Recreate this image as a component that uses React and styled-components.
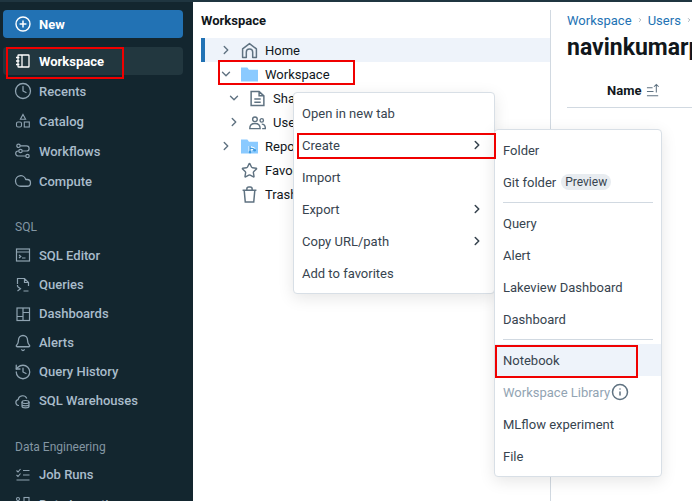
import React from "react";
import styled, { createGlobalStyle } from "styled-components";
import { ChevronRight, ChevronDown, Clock, Cloud, Bell, History, Star, Info } from "lucide-react";

const GlobalStyle = createGlobalStyle`
  html, body { margin: 0; padding: 0; background: #fff; }
  body { font-family: Roboto, "Noto Sans", sans-serif; font-size: 13px; }
  * { box-sizing: border-box; }
`;

const Svg = ({ size = 16, children, ...rest }) => (
  <svg width={size} height={size} viewBox="0 0 16 16" fill="none" stroke="currentColor" strokeWidth="1.1" {...rest}>
    {children}
  </svg>
);

const NewIcon = () => (
  <Svg><circle cx="8" cy="8" r="7" strokeWidth="1.4" /><path d="M8 4.6v6.8M4.6 8h6.8" strokeWidth="1.5" /></Svg>
);
const NotebookIcon = () => (
  <Svg><rect x="3" y="2" width="11" height="12" rx=".6" strokeWidth="1.3" /><path d="M7 2v12M1 4.5h3.4M1 8h3.4M1 11.5h3.4" strokeWidth="1.3" /></Svg>
);
const CatalogIcon = () => (
  <Svg><path d="M8 1.5l2.6 4.7H5.400z" /><rect x="1.500" y="9" width="5" height="5" rx="1.500" /><rect x="9.300" y="9" width="5" height="5" /></Svg>
);
const WorkflowIcon = () => (
  <Svg strokeWidth="1.200"><circle cx="3.500" cy="2.800" r="1.700" /><circle cx="5.500" cy="8" r="1.700" /><circle cx="12.500" cy="13" r="1.700" />
    <path d="M5.200 2.800h6.300a2.600 2.600 0 0 1 0 5.200H7.200M3.800 8h-.6a2.500 2.500 0 0 0 0 5h7.600" /></Svg>
);
const EditorIcon = () => (
  <Svg strokeWidth="1.200"><rect x="1.500" y="2" width="13" height="12" /><path d="M1.500 5h13M4 8l1.800 1.500L4 11M7 11h3.500" /></Svg>
);
const QueryIcon = () => (
  <Svg strokeWidth="1.200"><path d="M2.500 7V1.500h7l4 4V9M9.500 1.500v4h4" /><path d="M2.500 9.500l3 2.300-3 2.300M2.500 8v1.500M8.500 14h5" /></Svg>
);
const DashIcon = () => (
  <Svg strokeWidth="1.200"><rect x="2" y="2" width="12.500" height="12.500" /><path d="M8 2v12.500M8 6.500h6.500M2 10.500h6" /></Svg>
);
const WarehouseIcon = () => (
  <Svg strokeWidth="1.200"><path d="M4 12.500H3.500A3 3 0 0 1 3.200 6.600 4.500 4.500 0 0 1 11.800 5.500" /><ellipse cx="10.500" cy="9" rx="3.500" ry="1.500" /><path d="M7 9v4.500c0 .8 1.500 1.300 3.500 1.300s3.500-.5 3.500-1.300V9M7 11.500c0 .8 1.500 1.300 3.500 1.300s3.500-.5 3.500-1.300" /></Svg>
);
const RunsIcon = () => (
  <Svg><path d="M1.500 3.500l1.500 1.500 2.500-3M8 3.500h6.500M1.500 8l1.500 1.500L5.500 6.500M8 8h6.500M1.500 13h13" /></Svg>
);
const IngestIcon = () => (
  <Svg><circle cx="3" cy="3" r="1.500" /><rect x="9" y="1.500" width="5" height="5" /><path d="M3 4.500V11h6" /></Svg>
);
const HomeIcon = () => (
  <Svg size={17} strokeWidth="1.400"><path d="M1.500 14.500V6.500L8 1.500l6.500 5v8h-3.500V9.500a3 3 0 0 0-6 0v5z" strokeLinejoin="round" /></Svg>
);
const FolderIcon = ({ children }) => (
  <svg width="17" height="17" viewBox="0 0 16 16">
    <path d="M0 1.500h6l1.500 2H16v11H0z" fill="#8acaff" />
    {children}
  </svg>
);
const DocIcon = () => (
  <Svg size={17} strokeWidth="1.400"><path d="M2 1.500h7.500l4.500 4v9H2zM9.500 1.500v4H14M5 8.500h6M5 11.500h6" /></Svg>
);
const UsersIcon = () => (
  <Svg size={17} strokeWidth="1.300"><circle cx="5.600" cy="5" r="2.200" /><circle cx="12" cy="6" r="1.600" /><path d="M.700 13.800c0-3 2-4.800 4.900-4.800s4.900 1.800 4.900 4.800zM12 9.500c2 0 3.400 1.300 3.400 4.300h-3" /></Svg>
);
const TrashIcon = () => (
  <Svg size={17} strokeWidth="1.400"><path d="M1.500 4h13M3 4l1 11h8l1-11M5.500 4V2.800A1.800 1.800 0 0 1 7.300 1h1.400a1.800 1.800 0 0 1 1.800 1.800V4" /></Svg>
);
const SortIcon = () => (
  <Svg size={15} strokeWidth="1.100"><path d="M1 5h6M1 9h7M1 13.500h12M11 10V1.500M8.500 4L11 1.500 13.500 4" /></Svg>
);

const Page = styled.div`
  position: relative;
  display: flex;
  width: 692px;
  height: 501px;
  overflow: hidden;
  border-top: 2px solid #1f3540;
`;

const Sidebar = styled.nav`
  flex: 0 0 193px;
  background: #13262f;
  padding: 10px 10px 0 3px;
  margin-top: -2px;
`;

const NewButton = styled.div`
  display: flex;
  align-items: center;
  gap: 8px;
  height: 28px;
  padding-left: 12px;
  border-radius: 4px;
  background: #2272b4;
  color: #fff;
  font-weight: 700;
  margin-bottom: 9px;
`;

const NavRow = styled.div`
  display: flex;
  align-items: center;
  gap: 8px;
  height: ${(p) => p.$h || 30}px;
  margin-bottom: ${(p) => (p.$active ? 1 : 0)}px;
  padding-left: 12px;
  border-radius: 4px;
  color: ${(p) => (p.$active ? "#ffffff" : "#a9bccb")};
  background: ${(p) => (p.$active ? "#22373f" : "transparent")};
  font-weight: ${(p) => (p.$active ? 700 : 500)};
  white-space: nowrap;
  svg { flex: 0 0 16px; color: ${(p) => (p.$active ? "#ffffff" : "#8fa3b1")}; }
  svg.lucide { flex: 0 0 18px; margin: 0 -1px; }
`;

const SectionLabel = styled.div`
  display: flex;
  align-items: center;
  height: 20px;
  margin-top: ${(p) => p.$top}px;
  margin-bottom: ${(p) => p.$bottom}px;
  padding-left: 12px;
  color: #8396a3;
  font-size: 12px;
`;

const TreePanel = styled.section`
  flex: 0 0 358px;
  margin-top: 8px;
  padding-left: 8px;
  border-right: 1px solid #d1d9e1;
`;

const PanelTitle = styled.h2`
  margin: 1px 0 7px;
  height: 20px;
  line-height: 20px;
  font-size: 13px;
  font-weight: 700;
  color: #11171c;
`;

const TreeRow = styled.div`
  display: flex;
  align-items: center;
  height: 24px;
  padding-left: ${(p) => p.$indent}px;
  color: #11171c;
  white-space: nowrap;
  background: ${(p) => (p.$selected ? "#eef3fa" : "transparent")};
  border-left: 4px solid ${(p) => (p.$selected ? "#2272b4" : "transparent")};
  svg { color: #5f7281; flex: none; }
`;

const Caret = styled.span`
  display: flex;
  width: 18px;
  margin-right: 4px;
  color: #5f7281;
`;

const RowLabel = styled.span`
  margin-left: 7px;
`;

const DetailPanel = styled.section`
  flex: 1;
  min-width: 0;
  padding: 8px 0 0 16px;
  overflow: hidden;
  white-space: nowrap;
`;

const Crumbs = styled.div`
  display: flex;
  align-items: center;
  gap: 5px;
  height: 20px;
  color: #2272b4;
  svg { color: #5f7281; }
`;

const PageTitle = styled.h1`
  margin: 2px 0 10px;
  height: 32px;
  line-height: 32px;
  font-size: 23px;
  font-weight: 700;
  color: #11171c;
`;

const HeaderRow = styled.div`
  display: flex;
  align-items: center;
  gap: 5px;
  height: 34px;
  padding: 0 0 1px 40px;
  border-bottom: 1px solid #d1d9e1;
  color: #11171c;
  font-weight: 700;
  svg { color: #5f7281; }
`;

const Menu = styled.div`
  position: absolute;
  top: ${(p) => p.$top}px;
  left: ${(p) => p.$left}px;
  width: ${(p) => p.$width}px;
  padding: 4px 0;
  background: #fff;
  border: 1px solid #d8dfe6;
  border-radius: 4px;
  box-shadow: 0 4px 16px rgba(0, 0, 0, 0.1);
`;

const MenuItem = styled.div`
  display: flex;
  align-items: center;
  justify-content: space-between;
  height: 32px;
  padding: 0 10px 0 8px;
  color: ${(p) => (p.$disabled ? "#92a4b3" : "#37444f")};
  background: ${(p) => (p.$hover ? "#eef3fa" : "transparent")};
  svg { color: #37444f; }
`;

const Left = styled.span`
  display: flex;
  align-items: center;
  gap: ${(p) => p.$gap}px;
  svg { color: #5f7281; }
`;

const Badge = styled.span`
  padding: 0 4px;
  height: 16px;
  line-height: 16px;
  border-radius: 8px;
  background: #e8ecf0;
  font-size: 12px;
`;

const Divider = styled.div`
  height: 1px;
  margin: 4px 8px;
  background: #d1d9e1;
`;

// red rectangles someone drew over the screenshot
const Annotation = styled.div`
  position: absolute;
  top: ${(p) => p.$y}px;
  left: ${(p) => p.$x}px;
  width: ${(p) => p.$w}px;
  height: ${(p) => p.$h}px;
  border: 2px solid #f00000;
`;

const chev = <ChevronRight size={14} strokeWidth={2.6} />;

export default function App() {
  return (
    <>
      <GlobalStyle />
      <Page>
        <Sidebar>
          <NewButton><NewIcon />New</NewButton>
          <NavRow $active $h={28}><NotebookIcon />Workspace</NavRow>
          <NavRow><Clock size={18} strokeWidth={1.7} />Recents</NavRow>
          <NavRow><CatalogIcon />Catalog</NavRow>
          <NavRow><WorkflowIcon />Workflows</NavRow>
          <NavRow><Cloud size={18} strokeWidth={1.7} />Compute</NavRow>
          <SectionLabel $top={21} $bottom={3}>SQL</SectionLabel>
          <NavRow><EditorIcon />SQL Editor</NavRow>
          <NavRow $h={29}><QueryIcon />Queries</NavRow>
          <NavRow $h={29}><DashIcon />Dashboards</NavRow>
          <NavRow $h={29}><Bell size={18} strokeWidth={1.7} />Alerts</NavRow>
          <NavRow $h={29}><History size={18} strokeWidth={1.7} />Query History</NavRow>
          <NavRow $h={29}><WarehouseIcon />SQL Warehouses</NavRow>
          <SectionLabel $top={22} $bottom={3}>Data Engineering</SectionLabel>
          <NavRow $h={29}><RunsIcon />Job Runs</NavRow>
          <NavRow><IngestIcon />Data Ingestion</NavRow>
        </Sidebar>

        <TreePanel>
          <PanelTitle>Workspace</PanelTitle>
          <TreeRow $selected $indent={14}>
            <Caret><ChevronRight size={14} strokeWidth={2.4} /></Caret><HomeIcon /><RowLabel>Home</RowLabel>
          </TreeRow>
          <TreeRow $indent={14}>
            <Caret><ChevronDown size={14} strokeWidth={2.4} /></Caret><FolderIcon /><RowLabel>Workspace</RowLabel>
          </TreeRow>
          <TreeRow $indent={22}>
            <Caret><ChevronDown size={14} strokeWidth={2.4} /></Caret><DocIcon /><RowLabel>Shared</RowLabel>
          </TreeRow>
          <TreeRow $indent={22}>
            <Caret><ChevronRight size={14} strokeWidth={2.4} /></Caret><UsersIcon /><RowLabel>Users</RowLabel>
          </TreeRow>
          <TreeRow $indent={14}>
            <Caret><ChevronRight size={14} strokeWidth={2.4} /></Caret>
            <FolderIcon>
              <path d="M8.500 7.500v6M8.500 9.500c3 0 4 .5 4 2" stroke="#fff" strokeWidth="2.800" fill="none" />
              <path d="M8.500 7.500v6M8.500 9.500c3 0 4 .5 4 2" stroke="#3f9be0" strokeWidth="1.200" fill="none" />
              <circle cx="8.500" cy="13.200" r="1.300" fill="#3f9be0" />
              <circle cx="12.800" cy="11.500" r="1.300" fill="#3f9be0" />
            </FolderIcon>
            <RowLabel>Repos</RowLabel>
          </TreeRow>
          <TreeRow $indent={36}>
            <Star size={17} strokeWidth={2} /><RowLabel>Favorites</RowLabel>
          </TreeRow>
          <TreeRow $indent={36}>
            <TrashIcon /><RowLabel>Trash</RowLabel>
          </TreeRow>
        </TreePanel>

        <DetailPanel>
          <Crumbs>Workspace <ChevronRight size={12} /> Users <ChevronRight size={12} /></Crumbs>
          <PageTitle>navinkumarparmar</PageTitle>
          <HeaderRow>Name <SortIcon /></HeaderRow>
        </DetailPanel>

        <Menu $top={90} $left={293} $width={202}>
          <MenuItem>Open in new tab</MenuItem>
          <MenuItem>Create {chev}</MenuItem>
          <MenuItem>Import</MenuItem>
          <MenuItem>Export {chev}</MenuItem>
          <MenuItem>Copy URL/path {chev}</MenuItem>
          <MenuItem>Add to favorites</MenuItem>
        </Menu>

        <Menu $top={127} $left={494} $width={168}>
          <MenuItem>Folder</MenuItem>
          <MenuItem><Left $gap={5}>Git folder <Badge>Preview</Badge></Left></MenuItem>
          <Divider />
          <MenuItem>Query</MenuItem>
          <MenuItem>Alert</MenuItem>
          <MenuItem>Lakeview Dashboard</MenuItem>
          <MenuItem>Dashboard</MenuItem>
          <Divider />
          <MenuItem $hover>Notebook</MenuItem>
          <MenuItem $disabled><Left $gap={1}>Workspace Library <Info size={18} strokeWidth={2} /></Left></MenuItem>
          <MenuItem>MLflow experiment</MenuItem>
          <MenuItem>File</MenuItem>
        </Menu>

        <Annotation $x={6} $y={45} $w={118} $h={32} />
        <Annotation $x={218} $y={58} $w={137} $h={25} />
        <Annotation $x={297} $y={131} $w={199} $h={26} />
        <Annotation $x={495} $y={343} $w={143} $h={33} />
      </Page>
    </>
  );
}
